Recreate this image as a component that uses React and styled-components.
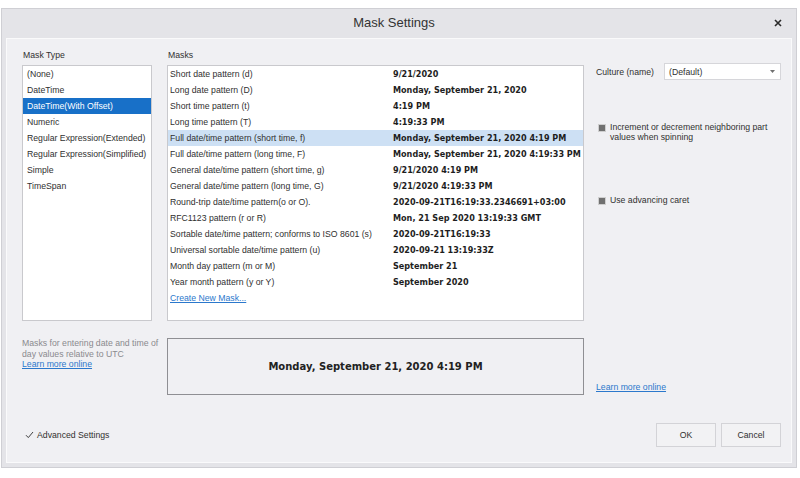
import React from "react";
import styled, { createGlobalStyle } from "styled-components";

const GlobalStyle = createGlobalStyle`
  body {
    margin: 0;
    background: #ffffff;
    font-family: "Liberation Sans", Arial, sans-serif;
    color: #303030;
  }
`;

const maskTypes = [
  "(None)",
  "DateTime",
  "DateTime(With Offset)",
  "Numeric",
  "Regular Expression(Extended)",
  "Regular Expression(Simplified)",
  "Simple",
  "TimeSpan",
];

const masks = [
  ["Short date pattern (d)", "9/21/2020"],
  ["Long date pattern (D)", "Monday, September 21, 2020"],
  ["Short time pattern (t)", "4:19 PM"],
  ["Long time pattern (T)", "4:19:33 PM"],
  ["Full date/time pattern (short time, f)", "Monday, September 21, 2020 4:19 PM"],
  ["Full date/time pattern (long time, F)", "Monday, September 21, 2020 4:19:33 PM"],
  ["General date/time pattern (short time, g)", "9/21/2020 4:19 PM"],
  ["General date/time pattern (long time, G)", "9/21/2020 4:19:33 PM"],
  ["Round-trip date/time pattern(o or O).", "2020-09-21T16:19:33.2346691+03:00"],
  ["RFC1123 pattern (r or R)", "Mon, 21 Sep 2020 13:19:33 GMT"],
  ["Sortable date/time pattern; conforms to ISO 8601 (s)", "2020-09-21T16:19:33"],
  ["Universal sortable date/time pattern (u)", "2020-09-21 13:19:33Z"],
  ["Month day pattern (m or M)", "September 21"],
  ["Year month pattern (y or Y)", "September 2020"],
];

const App = () => {
  return (
    <>
      <GlobalStyle />
      <Window>
        <TitleBar>
          <span />
          <Title>Mask Settings</Title>
          <CloseButton>
            <svg width="8" height="8" viewBox="0 0 8 8">
              <path d="M1 1L7 7M7 1L1 7" stroke="#2a2a2a" strokeWidth="1.6" />
            </svg>
          </CloseButton>
        </TitleBar>
        <Panel>
          <TopGrid>
            <Label>Mask Type</Label>
            <Label>Masks</Label>
            <span />
            <TypeList>
              {maskTypes.map((t) => (
                <TypeItem key={t} $selected={t === "DateTime(With Offset)"}>
                  {t}
                </TypeItem>
              ))}
            </TypeList>
            <MaskList>
              {masks.map(([name, value], i) => (
                <MaskRow key={name} $selected={i === 4}>
                  <span>{name}</span>
                  <MaskValue>{value}</MaskValue>
                </MaskRow>
              ))}
              <MaskRow>
                <Link>Create New Mask...</Link>
              </MaskRow>
            </MaskList>
            <Options>
              <CultureRow>
                <CultureLabel>Culture (name)</CultureLabel>
                <Combo>
                  <span>(Default)</span>
                  <svg width="5" height="3" viewBox="0 0 5 3">
                    <path d="M0 0H5L2.5 3Z" fill="#707070" />
                  </svg>
                </Combo>
              </CultureRow>
              <Option $top={42}>
                <Box />
                <OptionText>
                  Increment or decrement neighboring part
                  <br />
                  values when spinning
                </OptionText>
              </Option>
              <Option $top={53}>
                <Box />
                <OptionText>Use advancing caret</OptionText>
              </Option>
            </Options>
          </TopGrid>
          <BottomGrid>
            <Description>
              Masks for entering date and time of
              <br />
              day values relative to UTC
              <br />
              <Link>Learn more online</Link>
            </Description>
            <Preview>Monday, September 21, 2020 4:19 PM</Preview>
            <SideLink>
              <Link>Learn more online</Link>
            </SideLink>
          </BottomGrid>
          <Footer>
            <CheckLabel>
              <svg width="9" height="8" viewBox="0 0 9 8">
                <path d="M1 4.2L3.3 6.6L8 1" fill="none" stroke="#404040" strokeWidth="1" />
              </svg>
              Advanced Settings
            </CheckLabel>
            <Buttons>
              <Button>OK</Button>
              <Button>Cancel</Button>
            </Buttons>
          </Footer>
        </Panel>
      </Window>
    </>
  );
};

export default App;

const Window = styled.div`
  box-sizing: border-box;
  margin: 8px 3px 0 1px;
  width: 796px;
  height: 460px;
  background: #e4e4e8;
  border: 1px solid #cfcfd4;
  padding: 0 4px 4px 4px;
  display: flex;
  flex-direction: column;
`;

const TitleBar = styled.div`
  height: 29px;
  display: grid;
  grid-template-columns: 1fr auto 1fr;
  align-items: center;
  padding: 0 10px 0 0;
`;

const Title = styled.div`
  font-size: 13px;
  color: #333;
  padding-bottom: 2px;
`;

const CloseButton = styled.div`
  justify-self: end;
  display: flex;
  align-items: center;
  padding-bottom: 2px;
`;

const Panel = styled.div`
  flex: 1;
  box-sizing: border-box;
  background: #f0f0f3;
  border: 1px solid #fafafb;
  padding: 9px 10px 15px 15px;
  display: flex;
  flex-direction: column;
  font-size: 8.7px;
`;

const TopGrid = styled.div`
  display: grid;
  grid-template-columns: 130px 417px 1fr;
  grid-template-rows: 17px 256px;
  column-gap: 15px;
`;

const Label = styled.div`
  line-height: 14px;
  padding-left: 1px;
`;

const TypeList = styled.div`
  box-sizing: border-box;
  background: #fff;
  border: 1px solid #c9c9cd;
`;

const TypeItem = styled.div`
  height: 16px;
  line-height: 16px;
  padding-left: 4px;
  white-space: nowrap;
  background: ${(p) => (p.$selected ? "#1870c8" : "transparent")};
  color: ${(p) => (p.$selected ? "#ffffff" : "#303030")};
`;

const MaskList = styled.div`
  box-sizing: border-box;
  background: #fff;
  border: 1px solid #c9c9cd;
`;

const MaskRow = styled.div`
  display: grid;
  grid-template-columns: 223px 1fr;
  height: 16px;
  line-height: 16px;
  padding-left: 2px;
  white-space: nowrap;
  background: ${(p) => (p.$selected ? "#cde0f4" : "transparent")};
`;

const MaskValue = styled.span`
  font-family: "DejaVu Sans", Verdana, sans-serif;
  font-weight: bold;
  font-size: 8.1px;
  color: #1e1e1e;
`;

const Link = styled.span`
  color: #2b78cc;
  text-decoration: underline;
`;

const Options = styled.div`
  grid-row: 2;
  grid-column: 3;
  margin-left: -3px;
  margin-top: -2px;
  display: flex;
  flex-direction: column;
`;

const CultureRow = styled.div`
  display: flex;
  align-items: center;
`;

const CultureLabel = styled.div`
  width: 68px;
`;

const Combo = styled.div`
  box-sizing: border-box;
  width: 117px;
  height: 17px;
  background: #fff;
  border: 1px solid #d6d6da;
  display: flex;
  align-items: center;
  justify-content: space-between;
  padding: 0 5px 0 4px;
`;

const Option = styled.div`
  display: flex;
  align-items: flex-start;
  gap: 4px;
  margin-top: ${(p) => p.$top}px;
  padding-left: 2px;
`;

const Box = styled.div`
  box-sizing: border-box;
  width: 8px;
  height: 8px;
  margin-top: 2px;
  flex-shrink: 0;
  border: 1px solid #cfcfcf;
  background: #707070;
`;

const OptionText = styled.div`
  line-height: 10px;
`;

const BottomGrid = styled.div`
  display: grid;
  grid-template-columns: 130px 417px 1fr;
  column-gap: 15px;
  margin-top: 17px;
  height: 57px;
`;

const Description = styled.div`
  color: #8a8a8e;
  line-height: 10.5px;
  white-space: nowrap;
`;

const Preview = styled.div`
  box-sizing: border-box;
  border: 1px solid #8f8f93;
  display: flex;
  align-items: center;
  justify-content: center;
  font-family: "DejaVu Sans", Verdana, sans-serif;
  font-weight: bold;
  font-size: 10px;
  color: #222;
`;

const SideLink = styled.div`
  align-self: end;
  margin: 0 0 3px -3px;
`;

const Footer = styled.div`
  margin-top: auto;
  display: flex;
  align-items: center;
  justify-content: space-between;
`;

const CheckLabel = styled.div`
  display: flex;
  align-items: center;
  gap: 3px;
  padding-left: 3px;
`;

const Buttons = styled.div`
  display: flex;
  gap: 5px;
`;

const Button = styled.div`
  box-sizing: border-box;
  width: 60px;
  height: 24px;
  border: 1px solid #d3d3d7;
  background: #f2f2f4;
  display: flex;
  align-items: center;
  justify-content: center;
`;
